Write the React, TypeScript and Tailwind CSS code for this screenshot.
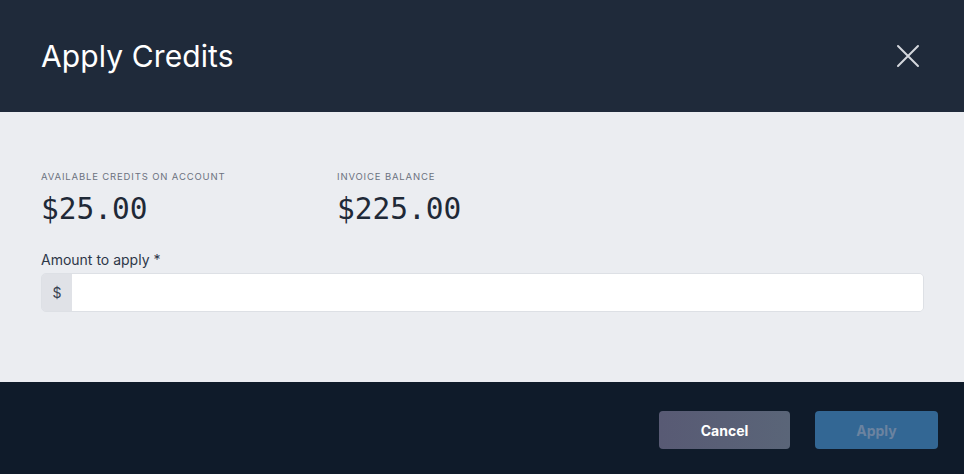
import React from 'react';

const App: React.FC = () => {
  return (
    <div className="w-[964px] h-[474px] flex flex-col font-['Inter','Noto_Sans',sans-serif] overflow-hidden">
      {/* Header */}
      <div className="h-[112px] bg-[#1f2a3a] flex items-center justify-between pl-[41px] pr-[44px]">
        <h1 className="text-[30px] text-white font-normal tracking-[0.1px] leading-none">Apply Credits</h1>
        <button className="w-[24px] h-[24px] flex items-center justify-center text-[#d4d7dd]">
          <svg width="24" height="24" viewBox="0 0 24 24" fill="none" stroke="currentColor" strokeWidth="2" strokeLinecap="round">
            <path d="M2 2 L22 22 M22 2 L2 22" />
          </svg>
        </button>
      </div>

      {/* Body */}
      <div className="h-[270px] bg-[#ebedf1] px-[41px] pt-[59px]">
        <div className="flex">
          <div className="w-[296px]">
            <div className="text-[9.5px] uppercase tracking-[0.85px] text-[#6b7280] leading-[12px]">Available credits on account</div>
            <div className="mt-[9px] text-[29.5px] leading-[34px] text-[#1f2937] font-['DejaVu_Sans_Mono',monospace]">$25.00</div>
          </div>
          <div>
            <div className="text-[9.5px] uppercase tracking-[0.85px] text-[#6b7280] leading-[12px]">Invoice balance</div>
            <div className="mt-[9px] text-[29.5px] leading-[34px] text-[#1f2937] font-['DejaVu_Sans_Mono',monospace]">$225.00</div>
          </div>
        </div>
        <div className="mt-[25px] text-[14px] text-[#2d3748] leading-[18px]">Amount to apply *</div>
        <div className="mt-[4px] flex h-[39px] w-[883px] rounded-[5px] border border-[#dde0e5] overflow-hidden">
          <div className="w-[30px] bg-[#e0e2e7] flex items-center justify-center text-[14px] text-[#374151]">$</div>
          <input className="flex-1 bg-white outline-none px-3 text-[14px]" />
        </div>
      </div>

      {/* Footer */}
      <div className="flex-1 bg-[#0f1b2a] flex items-center justify-end pr-[26px] gap-[25px] pt-[4px]">
        <button className="w-[131px] h-[38px] rounded-[4px] bg-gradient-to-r from-[#585a74] to-[#5a6578] text-white text-[14px] font-bold">Cancel</button>
        <button className="w-[123px] h-[38px] rounded-[4px] bg-[#336794] text-[#6b83a0] text-[14px] font-bold">Apply</button>
      </div>
    </div>
  );
};

export default App;
